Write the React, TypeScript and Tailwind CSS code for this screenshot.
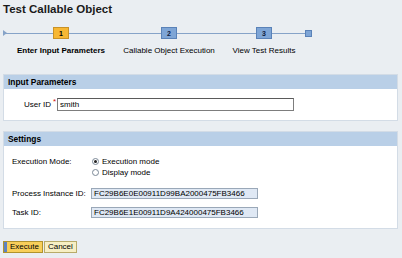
import React from "react";

function Step({ n, label, active, width }: { n: string; label: string; active?: boolean; width: string }) {
  return (
    <div className={`${width} flex flex-col items-center`}>
      <div
        className={
          active
            ? "mt-[3px] w-[16px] h-[12px] bg-[#f7b733] border border-[#c99227] flex items-center justify-center text-[7px] font-bold text-black leading-none"
            : "mt-[3px] w-[16px] h-[12px] bg-[#7ea5d6] border border-[#5a82b8] flex items-center justify-center text-[7px] font-bold text-[#102040] leading-none"
        }
      >
        {n}
      </div>
      <div className={`mt-[7px] whitespace-nowrap text-[8px] leading-[10px] text-black ${active ? "font-bold text-[8.4px]" : ""}`}>
        {label}
      </div>
    </div>
  );
}

function Radio({ checked, label }: { checked?: boolean; label: string }) {
  return (
    <div className="flex items-center h-[11px]">
      <div className="w-[7px] h-[7px] rounded-full border border-[#7a8896] bg-white flex items-center justify-center">
        {checked && <div className="w-[3px] h-[3px] rounded-full bg-[#222]" />}
      </div>
      <span className="ml-[3px] text-[8px] leading-[10px]">{label}</span>
    </div>
  );
}

export default function App() {
  return (
    <div className="w-[402px] h-[258px] overflow-hidden bg-[#eaeef2] font-['Liberation_Sans',Arial,sans-serif] text-black">
      <div className="pl-[3px] pt-[2px] h-[16px] text-[11.5px] leading-[14px] font-bold text-[#1a1a1a]">
        Test Callable Object
      </div>

      {/* Roadmap */}
      <div className="relative mt-[8px] h-[32px] pl-[6px] flex">
        <div className="absolute left-[3px] w-[305px] top-[9px] h-px bg-[#86a3c8]" />
        <div className="absolute left-[3px] top-[6px] w-0 h-0 border-y-[3px] border-y-transparent border-l-[4px] border-l-[#86a3c8]" />
        <div className="relative flex">
          <Step n="1" label="Enter Input Parameters" active width="w-[110px]" />
          <Step n="2" label="Callable Object Execution" width="w-[106px]" />
          <Step n="3" label="View Test Results" width="w-[84px]" />
          <div className="ml-[-1px] mt-[6px] w-[7px] h-[7px] bg-[#7ea5d6] border border-[#5a82b8]" />
        </div>
      </div>

      {/* Input Parameters panel */}
      <div className="mt-[18px] mx-[3px] w-[395px] border border-[#d3dce6] bg-white">
        <div className="h-[14px] bg-[#b9cfe7] pl-[4px] text-[8.4px] leading-[14px] font-bold">Input Parameters</div>
        <div className="h-[31px] flex items-center">
          <div className="ml-[20px] w-[33px] flex justify-start text-[8px] leading-[10px] relative">
            User ID
            <span className="absolute left-[29px] top-[-3px] text-[#d01010] text-[8px]">*</span>
          </div>
          <input
            readOnly
            value="smith"
            className="w-[237px] h-[13px] border border-[#7d7d7d] border-t-[#5a5a5a] bg-white px-[2px] text-[8px] leading-[11px] outline-none"
          />
        </div>
      </div>

      {/* Settings panel */}
      <div className="mt-[10px] mx-[3px] w-[395px] border border-[#d3dce6] bg-white">
        <div className="h-[14px] bg-[#b9cfe7] pl-[4px] text-[8.4px] leading-[14px] font-bold">Settings</div>
        <div className="pl-[8px] pt-[10px] pb-[10px] flex flex-col">
          <div className="flex">
            <div className="w-[80px] text-[8px] leading-[11px]">Execution Mode:</div>
            <div className="flex flex-col">
              <Radio checked label="Execution mode" />
              <Radio label="Display mode" />
            </div>
          </div>
          <div className="flex items-center mt-[10px]">
            <div className="w-[79px] text-[8px] leading-[10px]">Process Instance ID:</div>
            <div className="w-[167px] h-[11px] border border-[#9aa8b8] bg-[#dfe8f4] px-[2px] text-[8px] leading-[9px]">
              FC29B6E0E00911D99BA2000475FB3466
            </div>
          </div>
          <div className="flex items-center mt-[8px]">
            <div className="w-[79px] text-[8px] leading-[10px]">Task ID:</div>
            <div className="w-[167px] h-[11px] border border-[#9aa8b8] bg-[#dfe8f4] px-[2px] text-[8px] leading-[9px]">
              FC29B6E1E00911D9A424000475FB3466
            </div>
          </div>
        </div>
      </div>

      {/* Buttons */}
      <div className="mt-[12px] ml-[3px] flex">
        <div className="h-[12px] flex border border-[#b0932e] bg-[#f8cf5a]">
          <div className="w-[3px] bg-[#5f83c0]" />
          <div className="px-[3px] text-[8px] leading-[10px]">Execute</div>
        </div>
        <div className="ml-[1px] h-[12px] border border-[#b8ab6a] bg-[#f7efc4] px-[3px] text-[8px] leading-[10px]">Cancel</div>
      </div>
    </div>
  );
}
